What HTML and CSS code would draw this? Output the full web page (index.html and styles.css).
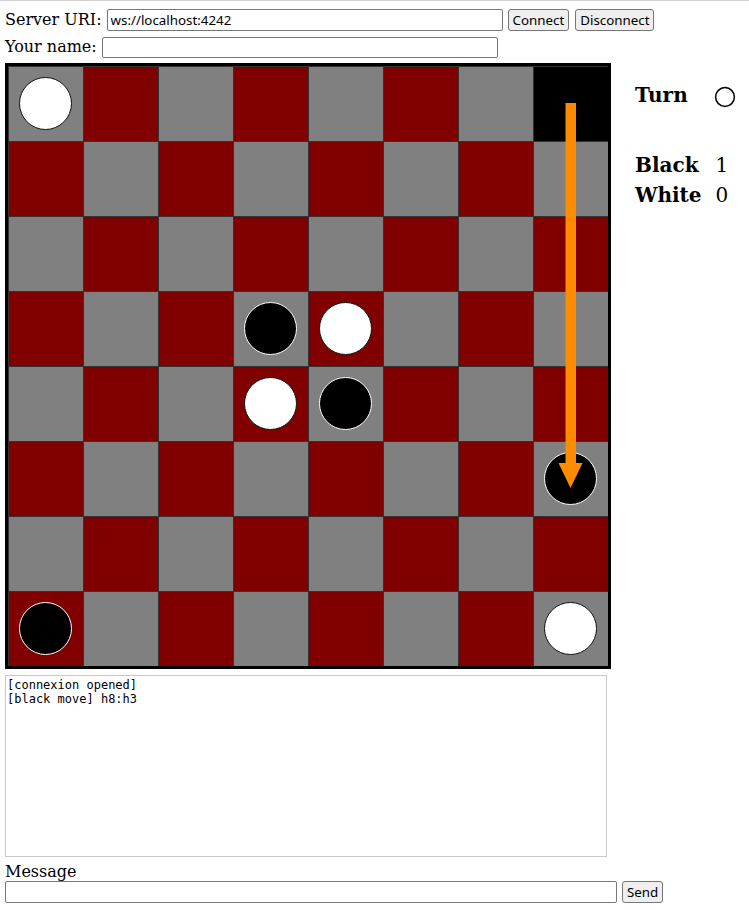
FILE: index.html
```html
<!DOCTYPE html>
<html>
<head>
<meta charset="utf-8">
<title>Checkers</title>
<link rel="stylesheet" href="styles.css">
</head>
<body>
<div class="page">
  <div class="row row-uri">
    <label class="lbl" for="uri">Server URI:</label>
    <input id="uri" class="field field-uri" type="text" value="ws://localhost:4242">
    <button class="btn">Connect</button>
    <button class="btn">Disconnect</button>
  </div>
  <div class="row row-name">
    <label class="lbl" for="name">Your name:</label>
    <input id="name" class="field field-name" type="text">
  </div>

  <div class="game">
    <div class="board">
      <div class="cell g"><span class="piece white"></span></div>
      <div class="cell r"></div>
      <div class="cell g"></div>
      <div class="cell r"></div>
      <div class="cell g"></div>
      <div class="cell r"></div>
      <div class="cell g"></div>
      <div class="cell sel"></div>

      <div class="cell r"></div>
      <div class="cell g"></div>
      <div class="cell r"></div>
      <div class="cell g"></div>
      <div class="cell r"></div>
      <div class="cell g"></div>
      <div class="cell r"></div>
      <div class="cell g"></div>

      <div class="cell g"></div>
      <div class="cell r"></div>
      <div class="cell g"></div>
      <div class="cell r"></div>
      <div class="cell g"></div>
      <div class="cell r"></div>
      <div class="cell g"></div>
      <div class="cell r"></div>

      <div class="cell r"></div>
      <div class="cell g"></div>
      <div class="cell r"></div>
      <div class="cell g"><span class="piece black"></span></div>
      <div class="cell r"><span class="piece white"></span></div>
      <div class="cell g"></div>
      <div class="cell r"></div>
      <div class="cell g"></div>

      <div class="cell g"></div>
      <div class="cell r"></div>
      <div class="cell g"></div>
      <div class="cell r"><span class="piece white"></span></div>
      <div class="cell g"><span class="piece black"></span></div>
      <div class="cell r"></div>
      <div class="cell g"></div>
      <div class="cell r"></div>

      <div class="cell r"></div>
      <div class="cell g"></div>
      <div class="cell r"></div>
      <div class="cell g"></div>
      <div class="cell r"></div>
      <div class="cell g"></div>
      <div class="cell r"></div>
      <div class="cell g"><span class="piece black"></span></div>

      <div class="cell g"></div>
      <div class="cell r"></div>
      <div class="cell g"></div>
      <div class="cell r"></div>
      <div class="cell g"></div>
      <div class="cell r"></div>
      <div class="cell g"></div>
      <div class="cell r"></div>

      <div class="cell r"><span class="piece black"></span></div>
      <div class="cell g"></div>
      <div class="cell r"></div>
      <div class="cell g"></div>
      <div class="cell r"></div>
      <div class="cell g"></div>
      <div class="cell r"></div>
      <div class="cell g"><span class="piece white"></span></div>

      <svg class="arrow" width="600" height="600" viewBox="0 0 600 600">
        <rect x="557.5" y="37" width="10.5" height="362" fill="#ff8c00"/>
        <polygon points="550.5,397 574.5,397 562.5,422" fill="#ff8c00"/>
      </svg>
    </div>

    <div class="side">
      <div class="stat-k">Turn</div>
      <div class="stat-v turn-v">
        <svg class="turn-ico" width="22" height="22" viewBox="0 0 22 22"><circle cx="11" cy="11" r="9.4" fill="#fff" stroke="#000" stroke-width="1.5"/></svg>
      </div>
      <div class="stat-k gap-top">Black</div>
      <div class="stat-v gap-top">1</div>
      <div class="stat-k">White</div>
      <div class="stat-v">0</div>
    </div>
  </div>

  <textarea class="log" readonly>[connexion opened]
[black move] h8:h3</textarea>

  <div class="msg-label">Message</div>
  <div class="row row-msg">
    <input class="field field-msg" type="text">
    <button class="btn">Send</button>
  </div>
</div>
</body>
</html>
```

FILE: styles.css
```css
html, body {
  margin: 0;
  padding: 0;
  background: #fff;
}

body {
  font-family: "DejaVu Serif", serif;
  font-size: 16px;
  color: #000;
  border-top: 1px solid #d0d0d0;
}

.page {
  padding: 8px 5px 0 5px;
}

.row {
  display: flex;
  align-items: center;
  height: 22px;
}

.row-uri {
  gap: 5px;
}

.row-uri .btn + .btn {
  margin-left: 1px;
}

.row-name {
  margin-top: 5px;
  gap: 5px;
  height: 22px;
}

.lbl {
  line-height: 20px;
}

.field {
  box-sizing: border-box;
  height: 22px;
  border: 1px solid #767676;
  border-radius: 2px;
  padding: 1px 3px;
  font-family: "Noto Sans", sans-serif;
  font-size: 13.33px;
  color: #000;
  background: #fff;
  margin: 0;
}

.field-uri {
  width: 396px;
}

.field-name {
  width: 396px;
  height: 21px;
}

.field-msg {
  width: 612px;
}

.btn {
  box-sizing: border-box;
  height: 22px;
  padding: 0 4px;
  border: 1px solid #767676;
  border-radius: 3px;
  background: #efefef;
  font-family: "Noto Sans", sans-serif;
  font-size: 13.33px;
  color: #000;
  margin: 0;
  line-height: 18px;
}

.game {
  display: flex;
  align-items: flex-start;
  margin-top: 5px;
}

.board {
  position: relative;
  display: grid;
  grid-template-columns: repeat(8, 75px);
  grid-template-rows: repeat(8, 75px);
  border: 3px solid #000;
  flex: none;
}

.cell {
  box-sizing: border-box;
  border-left: 1px solid #333;
  border-top: 1px solid #333;
  display: flex;
  align-items: center;
  justify-content: center;
}

.cell.g {
  background: #808080;
}

.cell.r {
  background: #800000;
}

.cell.sel {
  background: #000;
}

.piece {
  box-sizing: border-box;
  width: 53px;
  height: 53px;
  border-radius: 50%;
  margin: -1px 0 0 -1px;
}

.piece.white {
  background: #fff;
  border: 1.2px solid #111;
}

.piece.black {
  background: #000;
  border: 1.2px solid #fff;
}

.arrow {
  position: absolute;
  left: 0;
  top: 0;
  pointer-events: none;
}

.side {
  display: grid;
  grid-template-columns: auto auto;
  column-gap: 14px;
  margin-left: 24px;
  padding-top: 17px;
  font-size: 20px;
  line-height: 30px;
}

.stat-k {
  font-weight: bold;
}

.gap-top {
  margin-top: 40px;
}

.turn-v {
  display: flex;
  align-items: center;
  height: 30px;
}

.turn-ico {
  display: block;
  margin-top: 4px;
  margin-left: -2px;
}

.log {
  display: block;
  box-sizing: border-box;
  width: 602px;
  height: 182px;
  margin-top: 6px;
  border: 1px solid #c8c8c8;
  padding: 2px 1px;
  font-family: "DejaVu Sans Mono", monospace;
  font-size: 12px;
  line-height: 14px;
  resize: none;
  color: #000;
  outline: none;
}

.msg-label {
  margin-top: 5px;
  line-height: 20px;
  height: 19px;
}

.row-msg {
  gap: 5px;
}
```
